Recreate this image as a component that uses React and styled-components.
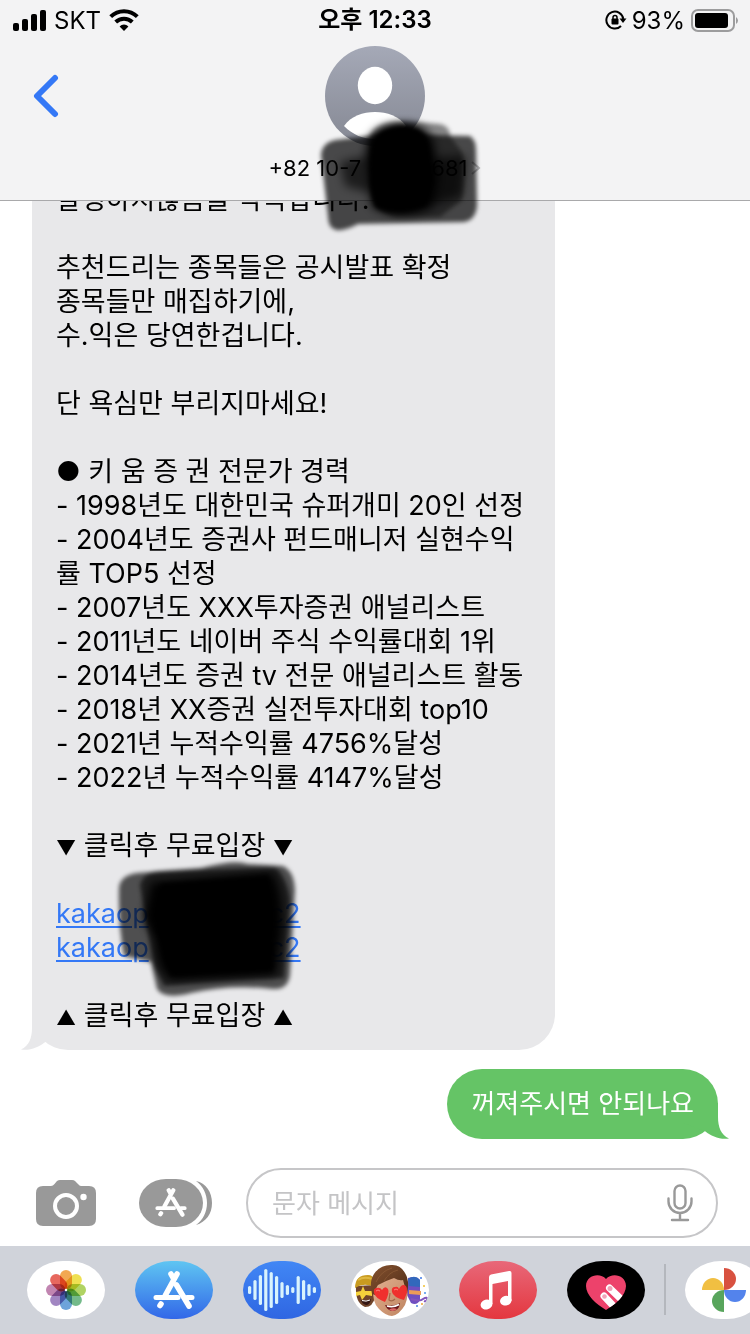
import styled, { createGlobalStyle } from 'styled-components'

const GlobalStyle = createGlobalStyle`
  :root {
    --bar-color: #f3f3f4;
    --bubble-color: #e8e8ea;
    --sent-color: #65c466;
    --link-color: #3478f6;
    --dock-color: #d0d3da;
    --font: Inter, "Noto Sans CJK KR", sans-serif;
  }

  * {
    box-sizing: border-box;
  }

  body {
    margin: 0;
    background: #fff;
    color: #000;
    font-family: var(--font);
  }

  button {
    display: block;
    padding: 0;
    border: 0;
    background: none;
    cursor: pointer;
  }

  svg {
    display: block;
  }
`;

const Screen = styled.div`
  display: flex;
  flex-direction: column;
  height: 100vh;
  overflow: hidden;
`;

const Header = styled.header`
  position: relative;
  z-index: 2;
  flex-shrink: 0;
  background: var(--bar-color);
  border-bottom: 1px solid #a9a9ab;
`;

const StatusBar = styled.div`
  display: grid;
  grid-template-columns: 1fr auto 1fr;
  align-items: center;
  height: 40px;
  padding: 0 12px;
  font-size: 24px;
`;

const StatusGroup = styled.div`
  display: flex;
  align-items: center;
  gap: ${props => props.$gap}px;
  justify-content: ${props => props.$end ? 'flex-end' : 'flex-start'};
`;

const Clock = styled.time`
  font-size: 24px;
  line-height: 28px;
  font-weight: 600;
`;

const NavBar = styled.div`
  display: grid;
  grid-template-columns: 1fr auto 1fr;
  align-items: start;
  padding: 6px 32px 0;
`;

const BackButton = styled.button`
  margin-top: 28px;
  justify-self: start;
`;

const Contact = styled.button`
  display: flex;
  flex-direction: column;
  align-items: center;
  height: 154px;
  gap: 8px;
  color: inherit;
  font-family: var(--font);
  font-size: 22px;
  line-height: 28px;
`;

const ContactName = styled.span`
  display: flex;
  align-items: center;
  white-space: pre;
`;

const Redacted = styled.span`
  position: relative;
  display: inline-block;
  width: ${props => props.$width}px;

  svg {
    position: absolute;
    left: ${props => props.$left}px;
    top: ${props => props.$top}px;
    z-index: 1;
    pointer-events: none;
  }
`;

const Thread = styled.main`
  display: flex;
  flex: 1;
  flex-direction: column;
  justify-content: flex-end;
  gap: 19px;
  min-height: 0;
  padding: 0 32px 29px;
`;

const Bubble = styled.div`
  position: relative;
  isolation: isolate;
  flex-shrink: 0;
  align-self: ${props => props.$sent ? 'flex-end' : 'flex-start'};
  width: ${props => props.$sent ? 'auto' : '100%'};
  max-width: 523px;
  padding: ${props => props.$sent ? '18px 24px' : '17px 24px'};
  border-radius: 36px;
  background: ${props => props.$sent ? 'var(--sent-color)' : 'var(--bubble-color)'};
  color: ${props => props.$sent ? '#fff' : '#000'};
  font-size: ${props => props.$sent ? 26 : 27}px;
  line-height: 34px;
`;

const Tail = styled.svg`
  position: absolute;
  bottom: 0;
  z-index: -1;
  ${props => props.$sent ? 'right: -11px; transform: scaleX(-1);' : 'left: -11px;'}
  fill: ${props => props.$sent ? 'var(--sent-color)' : 'var(--bubble-color)'};
`;

const Line = styled.p`
  min-height: 34px;
  margin: 0;
`;

const Marker = styled.span`
  font-size: 20px;
  line-height: 20px;
`;

const MessageLink = styled.a`
  color: var(--link-color);
  text-decoration: underline;
  text-decoration-thickness: 2px;
  text-underline-offset: 3px;
`;

const Composer = styled.form`
  display: flex;
  flex-shrink: 0;
  align-items: center;
  gap: 34px;
  padding: 0 32px 8px 36px;
`;

const Tools = styled.div`
  display: flex;
  align-items: center;
  gap: 43px;
`;

const Field = styled.label`
  display: flex;
  flex: 1;
  align-items: center;
  min-width: 0;
  height: 70px;
  padding: 0 23px 0 24px;
  border: 2px solid #c6c6c8;
  border-radius: 35px;
`;

const TextBox = styled.input`
  flex: 1;
  min-width: 0;
  padding: 0;
  border: 0;
  outline: 0;
  background: none;
  font-family: var(--font);
  font-size: 26px;

  &::placeholder {
    color: #c4c4c6;
    opacity: 1;
  }
`;

const Dock = styled.nav`
  display: flex;
  flex-shrink: 0;
  gap: 30px;
  height: 88px;
  padding: 15px 0 0 27px;
  overflow: hidden;
  background: var(--dock-color);
`;

const DockApp = styled.button`
  flex-shrink: 0;
  width: 78px;
  height: 58px;
  overflow: hidden;
  border-radius: 36px / 29px;
  background: ${props => props.$fill};
`;

const Divider = styled.span`
  flex-shrink: 0;
  align-self: flex-start;
  width: 2px;
  height: 51px;
  margin: 3px -11px 0;
  background: #b4b7bd;
`;

const messageLines = [
  '발생하지않음을 약속합니다.',
  '',
  '추천드리는 종목들은 공시발표 확정',
  '종목들만 매집하기에,',
  '수.익은 당연한겁니다.',
  '',
  '단 욕심만 부리지마세요!',
  '',
  '● 키 움 증 권 전문가 경력',
  '- 1998년도 대한민국 슈퍼개미 20인 선정',
  '- 2004년도 증권사 펀드매니저 실현수익',
  '률 TOP5 선정',
  '- 2007년도 XXX투자증권 애널리스트',
  '- 2011년도 네이버 주식 수익률대회 1위',
  '- 2014년도 증권 tv 전문 애널리스트 활동',
  '- 2018년 XX증권 실전투자대회 top10',
  '- 2021년 누적수익률 4756%달성',
  '- 2022년 누적수익률 4147%달성',
  '',
];

function Signal() {
  return (
    <svg width="34" height="22" viewBox="0 0 34 22" aria-hidden="true">
      <rect x="1" y="14" width="6" height="8" rx="2" />
      <rect x="10" y="10" width="6" height="12" rx="2" />
      <rect x="19" y="5" width="6" height="17" rx="2" />
      <rect x="28" y="1" width="6" height="21" rx="2" />
    </svg>
  );
}

function Wifi() {
  return (
    <svg width="30" height="22" viewBox="0 0 30 22" fill="none" stroke="#000" strokeWidth="4" aria-hidden="true">
      <path d="M1.700 7.600A19 19 0 0 1 28.300 7.600" />
      <path d="M6.700 13A12 12 0 0 1 23.300 13" />
      <path d="M15 22L10.600 17.400A6.300 6.300 0 0 1 19.400 17.400Z" fill="#000" stroke="none" />
    </svg>
  );
}

function RotationLock() {
  return (
    <svg width="22" height="20" viewBox="0 0 22 20" aria-hidden="true">
      <path d="M16 16A8.500 8.500 0 1 1 18.300 9" fill="none" stroke="#000" strokeWidth="2" />
      <path d="M14.500 8.500H21.500L18 13Z" />
      <rect x="6.500" y="8.500" width="7" height="6" rx="1" />
      <path d="M8 9V7.500a2 2 0 0 1 4 0V9" fill="none" stroke="#000" strokeWidth="1.500" />
    </svg>
  );
}

function Battery() {
  return (
    <svg width="48" height="23" viewBox="0 0 48 23" aria-hidden="true">
      <rect x="2" y="1" width="42" height="21" rx="6" fill="none" stroke="#9c9c9d" strokeWidth="2" />
      <rect x="5" y="4" width="33" height="15" rx="3" />
      <path d="M46 8q2 1.500 2 3.500t-2 3.500z" fill="#9c9c9d" />
    </svg>
  );
}

function Avatar() {
  return (
    <svg width="100" height="100" viewBox="0 0 100 100" aria-hidden="true">
      <defs>
        <linearGradient id="avatar" x1="0" y1="0" x2="0" y2="1">
          <stop offset="0" stopColor="#a5a9b7" />
          <stop offset="1" stopColor="#858893" />
        </linearGradient>
      </defs>
      <circle cx="50" cy="50" r="50" fill="url(#avatar)" />
      <ellipse cx="50" cy="39.500" rx="17.200" ry="18.700" fill="#fff" />
      <path d="M19 80C26 70 38 66 50 66S74 70 81 80C72 89 62 93 50 93S28 89 19 80Z" fill="#fff" />
    </svg>
  );
}

function NameScribble() {
  return (
    <svg width="190" height="140" viewBox="305 105 190 140" aria-hidden="true">
      <defs>
        <filter id="soft"><feGaussianBlur stdDeviation="2" /></filter>
        <filter id="softer"><feGaussianBlur stdDeviation="5" /></filter>
      </defs>
      <g filter="url(#soft)">
        <path d="M321 155Q322 143 335 140L385 134L470 136Q476 140 476 150L477 205Q476 220 464 222L358 224Q345 231 336 230Q328 228 328 216Z" fill="#000" opacity=".7" />
        <path d="M370 135Q378 121 402 121L440 124Q450 126 450 136L462 152Q466 170 462 200L440 217L395 217Q372 212 371 190Z" fill="#000" opacity=".45" />
      </g>
      <g filter="url(#softer)">
        <path d="M366 148Q370 125 400 124Q428 122 434 145L438 180L432 208Q400 222 372 207Z" fill="#000" />
        <path d="M340 162L372 154V194L345 186Z" fill="#000" opacity=".6" />
        <path d="M430 158L466 156L462 196L430 206Z" fill="#000" opacity=".65" />
      </g>
      <path d="M373 148Q376 128 400 126Q424 126 428 145L433 180L426 205Q400 217 376 207Q366 180 373 148Z" fill="#000" filter="url(#soft)" />
    </svg>
  );
}

function LinkScribble() {
  return (
    <svg width="200" height="150" viewBox="105 855 200 150" aria-hidden="true">
      <g filter="url(#soft)">
        <path d="M118 887Q120 875 136 873L200 868Q235 859 246 864L282 866Q293 871 294 890L289 975Q287 990 272 989Q230 984 190 993Q163 1000 156 989L150 962L123 956Q117 925 118 887Z" fill="#000" opacity=".66" />
        <path d="M139 885Q142 872 160 871L275 868Q286 878 289 900L283 978Q225 980 163 986L153 965Z" fill="#000" opacity=".62" />
      </g>
      <g filter="url(#softer)">
        <path d="M150 882L271 872Q283 890 281 930L275 975L170 980Q155 970 154 940L143 918Z" fill="#000" />
      </g>
      <path d="M160 884L267 876L272 970L170 976L155 930Z" fill="#000" filter="url(#soft)" />
    </svg>
  );
}

function BubbleTail({ sent }) {
  return (
    <Tail $sent={sent} width="46" height="36" viewBox="0 0 46 36" aria-hidden="true">
      <path d="M11 0V14C11 24 8 32 0 35.500C9 37 18 33 23.500 28.500L46 20V0Z" />
    </Tail>
  );
}

function CameraIcon() {
  return (
    <svg width="60" height="48" viewBox="0 0 60 48" aria-hidden="true">
      <path d="M7 7H15Q17 7 18.500 5L21 2Q22.500 1 24 1H36Q38 1 39 2L42 5Q43.500 7 45 7H53Q60 7 60 14V40Q60 47 53 47H7Q0 47 0 40V14Q0 7 7 7Z" fill="#999" />
      <circle cx="30" cy="27" r="11" fill="none" stroke="#fff" strokeWidth="4" />
      <circle cx="47.500" cy="18" r="3.200" fill="#fff" />
    </svg>
  );
}

// The three crossed sticks, drawn in a 42 x 38 area
function StoreGlyph(props) {
  return (
    <svg width="42" height="38" viewBox="0 0 42 38" fill="none" stroke="#fff" strokeLinecap="round" {...props}>
      <path d="M24 3L12.500 24M18 3L20.500 7.500M23.500 14L36 35M8 33L7 34.500" strokeWidth="5.600" />
      <path d="M3 26.500H25M34 26.500H39" strokeWidth="5" />
    </svg>
  );
}

function StoreButtonIcon() {
  return (
    <svg width="73" height="48" viewBox="0 0 73 48" aria-hidden="true">
      <path d="M57 2C67 4 73 13 73 24S67 43 57 46C64 41 68 33 68 24S64 7 57 2Z" fill="#999" />
      <rect width="64" height="48" rx="27" ry="24" fill="#999" />
      <StoreGlyph x="16" y="9" width="32" height="29" />
    </svg>
  );
}

function MicIcon() {
  return (
    <svg width="26" height="38" viewBox="0 0 26 38" fill="none" stroke="#999" strokeWidth="2.400" strokeLinecap="round" aria-hidden="true">
      <rect x="7.500" y="1.500" width="11" height="23" rx="5.500" />
      <path d="M1.500 14.500V17.500A11.500 11.500 0 0 0 24.500 17.500V14.500M13 29V35.500M5 36H21" />
    </svg>
  );
}

const petals = ['#f0952b', '#ecd92c', '#9fc940', '#55ab70', '#4c8fd2', '#8c6bb5', '#b46aa0', '#e2473a'];

function PhotosIcon() {
  return (
    <svg width="78" height="58" viewBox="0 0 78 58" aria-hidden="true">
      <g style={{ isolation: 'isolate' }}>
        {petals.map((color, i) => (
          <rect
            key={color}
            x="33"
            y="9"
            width="12"
            height="19.500"
            rx="6"
            fill={color}
            opacity=".82"
            transform={`rotate(${i * 45} 39 29)`}
            style={{ mixBlendMode: 'multiply' }}
          />
        ))}
      </g>
      <circle cx="39" cy="29" r="1.200" fill="#fff" />
    </svg>
  );
}

const bars = [4, 10, 15, 21, 18, 14, 8, 5, 3, 14, 10, 6, 3];

function AudioIcon() {
  return (
    <svg width="78" height="58" viewBox="0 0 78 58" stroke="#d8f3fd" strokeWidth="3.200" strokeLinecap="round" aria-hidden="true">
      {bars.map((half, i) => (
        <path key={i} d={`M${6.6 + i * 5.4} ${30.5 - half}V${27.5 + half}`} />
      ))}
    </svg>
  );
}

function MemojiIcon() {
  return (
    <svg width="78" height="58" viewBox="0 0 78 58" aria-hidden="true">
      <defs>
        <linearGradient id="hair" x1="0" y1="0" x2="1" y2="1">
          <stop offset="0" stopColor="#85522f" />
          <stop offset="1" stopColor="#4f2c18" />
        </linearGradient>
        <linearGradient id="face" x1="0" y1="0" x2="1" y2="1">
          <stop offset="0" stopColor="#e3b393" />
          <stop offset="1" stopColor="#bf8460" />
        </linearGradient>
      </defs>
      <path d="M5 25Q4 42 14 46Q22 46 24 36V24Z" fill="#70442b" />
      <path d="M4 27Q4 14 17 14Q22 14 23 19V26Q13 21 4 27Z" fill="#c99b20" />
      <path d="M7 19Q13 15 21 18" fill="none" stroke="#e0b942" strokeWidth="2" />
      <path d="M5 31L10 30L12 25L14 30L21 30V35L15 34L11 39L9 34L5 35Z" fill="#f5d13b" />
      <path d="M10 39Q16 41 20 38Q19 44 15 44Q11 43 10 39Z" fill="#341714" />
      <path d="M11 39.500Q15 41 19 39" stroke="#fff" fill="none" />
      <path d="M57 17Q65 14 69 19L69 39Q66 45 60 42L56 34Z" fill="#6f4fc0" />
      <path d="M57 18Q64 13 69 19L69 26L58 25Z" fill="#3268bc" />
      <path d="M58 29L70 30V34L58 33Z" fill="#eb9c58" />
      <path d="M60 38Q69 41 72 38Q77 35 76 39Q75 41 73 40" fill="none" stroke="#8254bd" strokeWidth="2" />
      <circle cx="70" cy="17" r="1" fill="#3d79e7" />
      <circle cx="73" cy="25" r="1" fill="#f0bf30" />
      <circle cx="74" cy="32" r="1" fill="#4b91ea" />
      <circle cx="66" cy="45" r="1" fill="#4a83de" />
      <circle cx="71" cy="43" r="1" fill="#efa537" />
      <path d="M22 25Q21 42 28 48Q35 55 41 55Q48 54 54 44Q58 35 56 21L38 12Z" fill="url(#face)" />
      <path d="M21 33Q18 20 23 13Q29 4 40 4Q49 3 54 12Q59 20 56 33Q54 26 52 19Q48 20 43 17Q34 20 27 24Q24 28 24 34Z" fill="url(#hair)" />
      <path d="M25 21Q30 10 41 7M33 20Q38 11 47 9" fill="none" stroke="#9c673f" strokeWidth="1" opacity=".5" />
      <path d="M39 32L38 39Q41 41 44 38" fill="none" stroke="#a3684a" strokeWidth="1.200" />
      <path d="M34 41Q24 37 23 32Q22 27 26 27Q29 26 31 29Q34 24 37 28Q39 32 34 41Z" fill="#ef302e" />
      <path d="M53 39Q42 36 41 31Q40 26 44 26Q47 25 48 28Q51 22 55 25Q58 29 53 39Z" fill="#ef302e" />
      <path d="M25 30Q27 28 29 30M43 29Q45 27 47 29" fill="none" stroke="#ff817b" strokeWidth="1" />
      <path d="M34 44Q42 46 49 42Q48 50 41 50Q36 49 34 44Z" fill="#6b171a" />
      <path d="M36 45Q42 47 48 43.500" fill="none" stroke="#fff" strokeWidth="1.600" />
      <path d="M38 48.500Q42 46.500 46 48Q44 50 41 50Z" fill="#df6967" />
    </svg>
  );
}

function MusicIcon() {
  return (
    <svg width="78" height="58" viewBox="0 0 78 58" fill="#fff" aria-hidden="true">
      <path d="M30 16Q30 14 32 13.500L50 10Q52.500 9.500 52.500 12V40H49V20L33.500 23V43H30Z" />
      <ellipse cx="27.500" cy="43.500" rx="6" ry="5" transform="rotate(-15 27.500 43.500)" />
      <ellipse cx="46.800" cy="39.700" rx="5.800" ry="4.800" transform="rotate(-15 46.800 39.700)" />
    </svg>
  );
}

function TouchIcon() {
  return (
    <svg width="78" height="58" viewBox="0 0 78 58" aria-hidden="true">
      <defs>
        <clipPath id="heart">
          <path d="M39 49C29 43 19 34 19 25C19 14 33 11 39 18C45 11 59 14 59 25C59 34 49 43 39 49Z" />
        </clipPath>
      </defs>
      <g clipPath="url(#heart)">
        <rect width="78" height="58" fill="#ed426b" />
        <path d="M37 35L51 50M42.500 27L59 43" stroke="#fff" strokeWidth="7" strokeLinecap="round" />
        <circle cx="37.500" cy="35.500" r="2.300" fill="#f0a3b8" />
        <circle cx="43" cy="27.500" r="2.500" fill="#f0a3b8" />
      </g>
    </svg>
  );
}

function PinwheelIcon() {
  return (
    <svg width="78" height="58" viewBox="0 0 78 58" aria-hidden="true">
      <path d="M39 7A12 11 0 0 1 39 29Z" fill="#d85140" />
      <path d="M61 29A11 12 0 0 1 39 29Z" fill="#5383ec" />
      <path d="M39 51A12 11 0 0 1 39 29Z" fill="#58a55c" />
      <path d="M17 29A11 12 0 0 1 39 29Z" fill="#f1bf42" />
    </svg>
  );
}

function ChatLink({ children }) {
  return (
    <Line>
      <MessageLink href="#kakao">
        kakaop
        <Redacted $width={120} $left={-43} $top={-102}>{children}</Redacted>
        c2
      </MessageLink>
    </Line>
  );
}

function Callout({ mark }) {
  return (
    <Line>
      <Marker>{mark}</Marker> 클릭후 무료입장 <Marker>{mark}</Marker>
    </Line>
  );
}

export default function App() {
  return (
    <Screen>
      <GlobalStyle />
      <Header>
        <StatusBar>
          <StatusGroup $gap={8}>
            <Signal />
            <span>SKT</span>
            <Wifi />
          </StatusGroup>
          <Clock>오후 12:33</Clock>
          <StatusGroup $gap={5} $end>
            <RotationLock />
            <span>93%</span>
            <Battery />
          </StatusGroup>
        </StatusBar>
        <NavBar>
          <BackButton aria-label="뒤로">
            <svg width="28" height="44" viewBox="0 0 28 44" fill="none" stroke="#3478f6" strokeWidth="6" strokeLinecap="round" strokeLinejoin="round" aria-hidden="true">
              <path d="M23 4L5 22L23 40" />
            </svg>
          </BackButton>
          <Contact>
            <Avatar />
            <ContactName>
              +82 10-7
              <Redacted $width={70} $left={-56} $top={-63}>
                <NameScribble />
              </Redacted>
              681
              <svg width="14" height="18" viewBox="0 0 14 18" fill="none" stroke="#b5b5b7" strokeWidth="2" aria-hidden="true">
                <path d="M5 3L12 9L5 15" />
              </svg>
            </ContactName>
          </Contact>
        </NavBar>
      </Header>

      <Thread>
        <Bubble>
          <BubbleTail />
          {messageLines.map((line, i) => <Line key={i}>{line}</Line>)}
          <Callout mark="▼" />
          <Line />
          <ChatLink />
          <ChatLink><LinkScribble /></ChatLink>
          <Line />
          <Callout mark="▲" />
        </Bubble>
        <Bubble $sent>
          <BubbleTail sent />
          꺼져주시면 안되나요
        </Bubble>
      </Thread>

      <Composer>
        <Tools>
          <button type="button" aria-label="카메라"><CameraIcon /></button>
          <button type="button" aria-label="앱"><StoreButtonIcon /></button>
        </Tools>
        <Field>
          <TextBox type="text" placeholder="문자 메시지" aria-label="문자 메시지" />
          <button type="button" aria-label="받아쓰기"><MicIcon /></button>
        </Field>
      </Composer>

      <Dock>
        <DockApp $fill="#fff" aria-label="사진"><PhotosIcon /></DockApp>
        <DockApp $fill="linear-gradient(#5fc5f2, #3267e8)" aria-label="App Store">
          <svg width="78" height="58" viewBox="0 0 78 58" aria-hidden="true">
            <StoreGlyph x="18" y="10" />
          </svg>
        </DockApp>
        <DockApp $fill="linear-gradient(#4187f5, #2f66e2)" aria-label="오디오"><AudioIcon /></DockApp>
        <DockApp $fill="#fff" aria-label="미모티콘"><MemojiIcon /></DockApp>
        <DockApp $fill="linear-gradient(#e86879, #e4373f)" aria-label="음악"><MusicIcon /></DockApp>
        <DockApp $fill="#000" aria-label="Digital Touch"><TouchIcon /></DockApp>
        <Divider />
        <DockApp $fill="#fff" aria-label="Google 포토"><PinwheelIcon /></DockApp>
      </Dock>
    </Screen>
  );
}
